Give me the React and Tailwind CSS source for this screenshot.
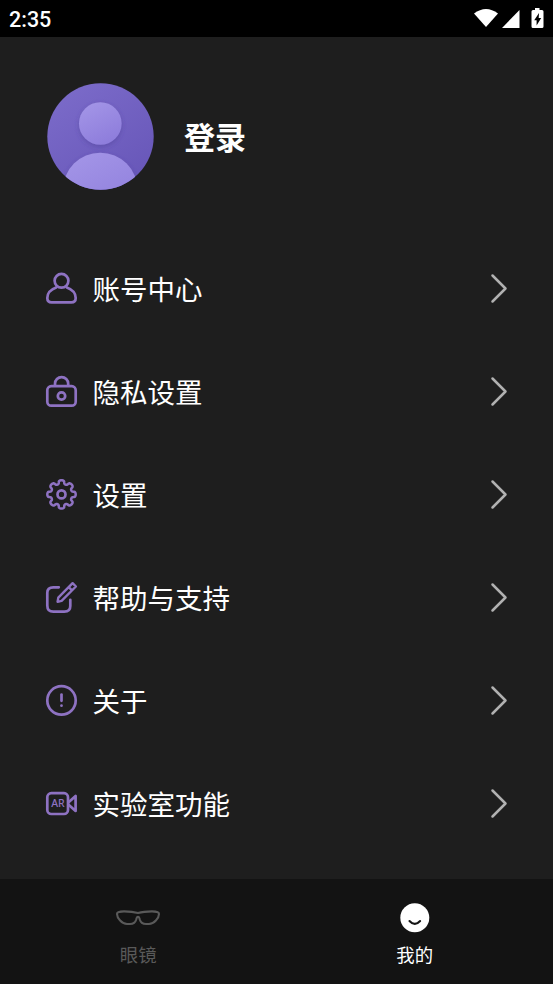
/**
 * App.jsx: profile tab with status bar, avatar header, menu list and bottom tabs
 */

const ICON = {
  width: 33,
  height: 33,
  viewBox: "0 0 33 33",
  fill: "none",
  stroke: "currentColor",
  strokeWidth: 2.7,
  strokeLinecap: "round",
  strokeLinejoin: "round",
  "aria-hidden": true,
};

function AccountIcon() {
  return (
    <svg {...ICON}>
      <circle cx="16.5" cy="8.8" r="6.9" />
      <path d="M11.2 15.4C5.6 17.4 2.3 21.6 2.3 26c0 2.9 1.5 4.4 4.4 4.4h19.6c2.9 0 4.4-1.5 4.4-4.4 0-4.400-3.300-8.600-8.900-10.600" />
    </svg>
  );
}

function PrivacyIcon() {
  return (
    <svg {...ICON}>
      <rect x="2.3" y="11.2" width="28.4" height="19.5" rx="4" />
      <path d="M10 10.500V8.700a6.600 6.600 0 0 1 13.200 0v1.800" />
      <circle cx="16.5" cy="21" r="3.7" />
    </svg>
  );
}

// Eight rounded teeth around the hub
const GEAR_POINTS = Array.from({ length: 240 }, (_, i) => {
  const a = (i / 240) * Math.PI * 2;
  const r = 12.4 + 1.8 * Math.cos(8 * a);
  const b = a + 0.045 * Math.sin(16 * a) + 0.025 * Math.sin(8 * a);
  return `${(16.5 + r * Math.sin(b)).toFixed(2)},${(16.4 - r * Math.cos(b)).toFixed(2)}`;
}).join(" ");

function SettingsIcon() {
  return (
    <svg {...ICON}>
      <polygon points={GEAR_POINTS} strokeWidth="2.5" />
      <circle cx="16.5" cy="16.4" r="4" />
    </svg>
  );
}

function SupportIcon() {
  return (
    <svg {...ICON}>
      <path d="M13.8 6.300H8.300c-4 0-6 1.700-6 5.500v12.700c0 4.200 1.800 6.200 6 6.200h11c4.200 0 6-1.700 6-5.700v-6.200" />
      <path d="M13.300 16.600 27.600 2.200l3.300 3.300-14.300 14.400-4 .9zM23.700 6.100l3.300 3.300" strokeWidth="2.4" />
    </svg>
  );
}

function AboutIcon() {
  return (
    <svg {...ICON}>
      <circle cx="16.5" cy="16.4" r="14.2" />
      <path d="M16.500 10.600v6.200" />
      <path d="M16.500 21.600v.1" />
    </svg>
  );
}

function LabIcon() {
  return (
    <svg {...ICON}>
      <rect x="2.3" y="6.2" width="20.700" height="20.800" rx="4" />
      <path d="m23.600 15.300 7-6.300v15l-7-6.300" />
      <text
        x="12.900"
        y="20.4"
        textAnchor="middle"
        fill="currentColor"
        stroke="none"
        className="font-['Noto_Sans',sans-serif] text-[10.5px] font-medium"
      >
        AR
      </text>
    </svg>
  );
}

const MENU = [
  { label: "账号中心", Icon: AccountIcon },
  { label: "隐私设置", Icon: PrivacyIcon },
  { label: "设置", Icon: SettingsIcon },
  { label: "帮助与支持", Icon: SupportIcon },
  { label: "关于", Icon: AboutIcon },
  { label: "实验室功能", Icon: LabIcon },
];

function StatusBar() {
  return (
    <div className="flex h-[37px] shrink-0 items-center justify-between bg-black pl-[9px] pr-2">
      <span className="pt-[3px] font-[Roboto,sans-serif] text-[21.5px] font-medium leading-none">2:35</span>
      <svg width="71" height="21" viewBox="0 0 71 21" fill="white" aria-hidden="true">
        <path d="M0 5.500Q12 -3.500 24 5.500L12 19z" />
        <path d="M45.500 2v18H28z" />
        <path
          fillRule="evenodd"
          d="M61 0h4.500v2H68q1.500 0 1.500 1.500v15q0 1.500-1.500 1.500h-9q-1.500 0-1.500-1.500v-15Q57.500 2 59 2h2zM65 5l-4.800 7.200h2.400v5.300l4.600-7.400h-2.500z"
        />
      </svg>
    </div>
  );
}

function Avatar() {
  return (
    <svg width="107" height="107" viewBox="0 0 107 107" aria-hidden="true">
      <defs>
        <linearGradient id="avatar-bg" x1="0.1" y1="0" x2="0.8" y2="1">
          <stop offset="0" stopColor="#7c6cca" />
          <stop offset="1" stopColor="#6756b8" />
        </linearGradient>
        <linearGradient id="avatar-fg" x1="0.2" y1="0" x2="0.7" y2="1">
          <stop offset="0" stopColor="#a395e7" />
          <stop offset="1" stopColor="#8d7cdb" />
        </linearGradient>
        <clipPath id="avatar-clip">
          <circle cx="53.5" cy="53.5" r="53.2" />
        </clipPath>
        <filter id="avatar-shadow" x="-30%" y="-30%" width="160%" height="160%">
          <feDropShadow dx="0" dy="2" stdDeviation="2.5" floodColor="#46388e" floodOpacity="0.4" />
        </filter>
      </defs>
      <g clipPath="url(#avatar-clip)">
        <rect width="107" height="107" fill="url(#avatar-bg)" />
        <circle cx="53.3" cy="40.5" r="21.3" fill="url(#avatar-fg)" filter="url(#avatar-shadow)" />
        <circle cx="53.3" cy="107" r="37.3" fill="url(#avatar-fg)" filter="url(#avatar-shadow)" />
      </g>
    </svg>
  );
}

function MenuRow({ label, Icon }) {
  return (
    <button className="flex h-[103px] w-full items-center pl-[45px] pr-[44px] text-left">
      <span className="text-[#8e72c2]">
        <Icon />
      </span>
      <span className="ml-[14.5px] flex-1 text-[27.5px] leading-none">{label}</span>
      <svg
        width="20"
        height="31"
        viewBox="0 0 20 31"
        fill="none"
        stroke="#b1b1b1"
        strokeWidth="2.5"
        strokeLinecap="round"
        strokeLinejoin="round"
        aria-hidden="true"
      >
        <path d="m3.500 2.500 13 13-13 13" />
      </svg>
    </button>
  );
}

function TabBar() {
  return (
    <nav className="grid h-[105px] shrink-0 grid-cols-2 bg-[#131313] pt-[22px] text-[18.4px] leading-none">
      <button className="flex flex-col items-center text-[#595959]">
        <svg
          width="46"
          height="34"
          viewBox="0 0 46 34"
          fill="none"
          stroke="currentColor"
          strokeWidth="2.1"
          strokeLinejoin="round"
          aria-hidden="true"
        >
          <path d="M2 13c0-2 2.500-2.600 7-2.600 5 0 9.500.3 14 1.600 4.500-1.300 9-1.600 14-1.600 4.500 0 7 .6 7 2.600 0 4-5 10-10 10h-3c-4.500 0-5.500-2-6.200-4.500-.5-2-.8-2.700-1.800-2.700s-1.300.7-1.800 2.700c-.7 2.500-1.700 4.500-6.200 4.500h-3c-5 0-10-6-10-10z" />
        </svg>
        <span className="mt-[10px]">眼镜</span>
      </button>
      <button className="flex flex-col items-center">
        <svg width="34" height="34" viewBox="0 0 34 34" aria-hidden="true">
          <circle cx="16.8" cy="16.7" r="14.5" fill="white" />
          <path
            d="M11.500 20q5.300 5.800 10.600 0"
            fill="none"
            stroke="#131313"
            strokeWidth="2.1"
            strokeLinecap="round"
          />
        </svg>
        <span className="mt-[10px]">我的</span>
      </button>
    </nav>
  );
}

export default function App() {
  return (
    <div className="flex h-[984px] w-[553px] flex-col overflow-hidden bg-[#1e1e1e] font-['Noto_Sans_CJK_SC',sans-serif] text-white">
      <StatusBar />

      <header className="flex h-[200px] shrink-0 items-center gap-[30.5px] pb-px pl-[46.5px]">
        <Avatar />
        <h1 className="pb-[3px] text-[31px] font-bold leading-none">登录</h1>
      </header>

      <main className="flex-1">
        {MENU.map((item) => (
          <MenuRow key={item.label} {...item} />
        ))}
      </main>

      <TabBar />
    </div>
  );
}
